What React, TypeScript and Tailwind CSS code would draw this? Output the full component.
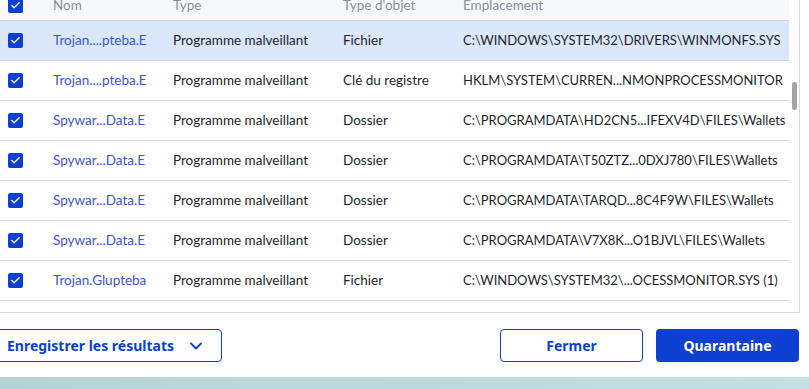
import { Check, ChevronDown } from 'lucide-react';

interface Threat {
  name: string;
  type: string;
  objectType: string;
  location: string;
  selected?: boolean;
}

const threats: Threat[] = [
  { name: 'Trojan....pteba.E', type: 'Programme malveillant', objectType: 'Fichier', location: 'C:\\WINDOWS\\SYSTEM32\\DRIVERS\\WINMONFS.SYS', selected: true },
  { name: 'Trojan....pteba.E', type: 'Programme malveillant', objectType: 'Clé du registre', location: 'HKLM\\SYSTEM\\CURREN...NMONPROCESSMONITOR' },
  { name: 'Spywar...Data.E', type: 'Programme malveillant', objectType: 'Dossier', location: 'C:\\PROGRAMDATA\\HD2CN5...IFEXV4D\\FILES\\Wallets' },
  { name: 'Spywar...Data.E', type: 'Programme malveillant', objectType: 'Dossier', location: 'C:\\PROGRAMDATA\\T50ZTZ...0DXJ780\\FILES\\Wallets' },
  { name: 'Spywar...Data.E', type: 'Programme malveillant', objectType: 'Dossier', location: 'C:\\PROGRAMDATA\\TARQD...8C4F9W\\FILES\\Wallets' },
  { name: 'Spywar...Data.E', type: 'Programme malveillant', objectType: 'Dossier', location: 'C:\\PROGRAMDATA\\V7X8K...O1BJVL\\FILES\\Wallets' },
  { name: 'Trojan.Glupteba', type: 'Programme malveillant', objectType: 'Fichier', location: 'C:\\WINDOWS\\SYSTEM32\\...OCESSMONITOR.SYS (1)' },
];

function Box() {
  return (
    <div className="w-[15px] h-[15px] bg-[#0d3fd1] rounded-[2px] flex items-center justify-center">
      <Check className="w-[11px] h-[11px] text-white" strokeWidth={3} />
    </div>
  );
}

export default function App() {
  return (
    <div
      className="w-[809px] h-[389px] overflow-hidden bg-gradient-to-r from-[#b3d4d7] to-[#c4e0e2] text-[#1e1f2b]"
      style={{ fontFamily: '"Noto Sans", "Liberation Sans", sans-serif' }}
    >
      <div className="h-[377px] bg-white flex flex-col">
        <div
          className="mt-[-13px] ml-[-1px] w-[801px] h-[326px] border border-[#d6d6de] flex overflow-hidden text-[13.5px]"
          style={{ fontFamily: 'Lato, "Noto Sans", sans-serif' }}
        >
          <div className="w-[789px] shrink-0 flex flex-col">
            <div className="h-[33px] shrink-0 bg-[#f7f8fa] border-b border-[#d6d6de] flex items-end pb-[5px] text-[#8b8f99]">
              <div className="w-[53px] shrink-0 pl-[8px] pb-[2px]"><Box /></div>
              <div className="w-[120px] shrink-0">Nom</div>
              <div className="w-[170px] shrink-0">Type</div>
              <div className="w-[120px] shrink-0">Type d'objet</div>
              <div className="whitespace-nowrap">Emplacement</div>
            </div>
            {threats.map((t, i) => (
              <div
                key={i}
                className={`h-10 shrink-0 border-b border-[#d6d6de] flex items-center ${t.selected ? 'bg-[#dbe7fb]' : ''}`}
              >
                <div className="w-[53px] shrink-0 pl-[8px]"><Box /></div>
                <div className="w-[120px] shrink-0 text-[#3a56d8]">{t.name}</div>
                <div className="w-[170px] shrink-0">{t.type}</div>
                <div className="w-[120px] shrink-0">{t.objectType}</div>
                <div className="whitespace-nowrap text-[13px]">{t.location}</div>
              </div>
            ))}
          </div>
          <div className="flex-1 pt-[94px] flex justify-center">
            <div className="w-[5px] h-[28px] rounded-full bg-[#a3a3a8]" />
          </div>
        </div>
        <div className="mt-[16px] flex items-center">
          <button className="ml-[-6px] h-[33px] pl-[12px] pr-[15px] border-[1.5px] border-[#0d3fd1] rounded-[4px] text-[14px] font-bold text-[#0d3fd1] flex items-center gap-[12px]">
            Enregistrer les résultats
            <ChevronDown className="w-[20px] h-[20px]" strokeWidth={2.2} />
          </button>
          <button className="ml-auto w-[143px] h-[33px] border-[1.5px] border-[#0d3fd1] rounded-[4px] text-[14px] font-bold text-[#0d3fd1]">
            Fermer
          </button>
          <button className="ml-[13px] mr-[10px] w-[143px] h-[33px] bg-[#0d3fd1] rounded-[4px] text-[14px] font-bold text-white">
            Quarantaine
          </button>
        </div>
      </div>
    </div>
  );
}
